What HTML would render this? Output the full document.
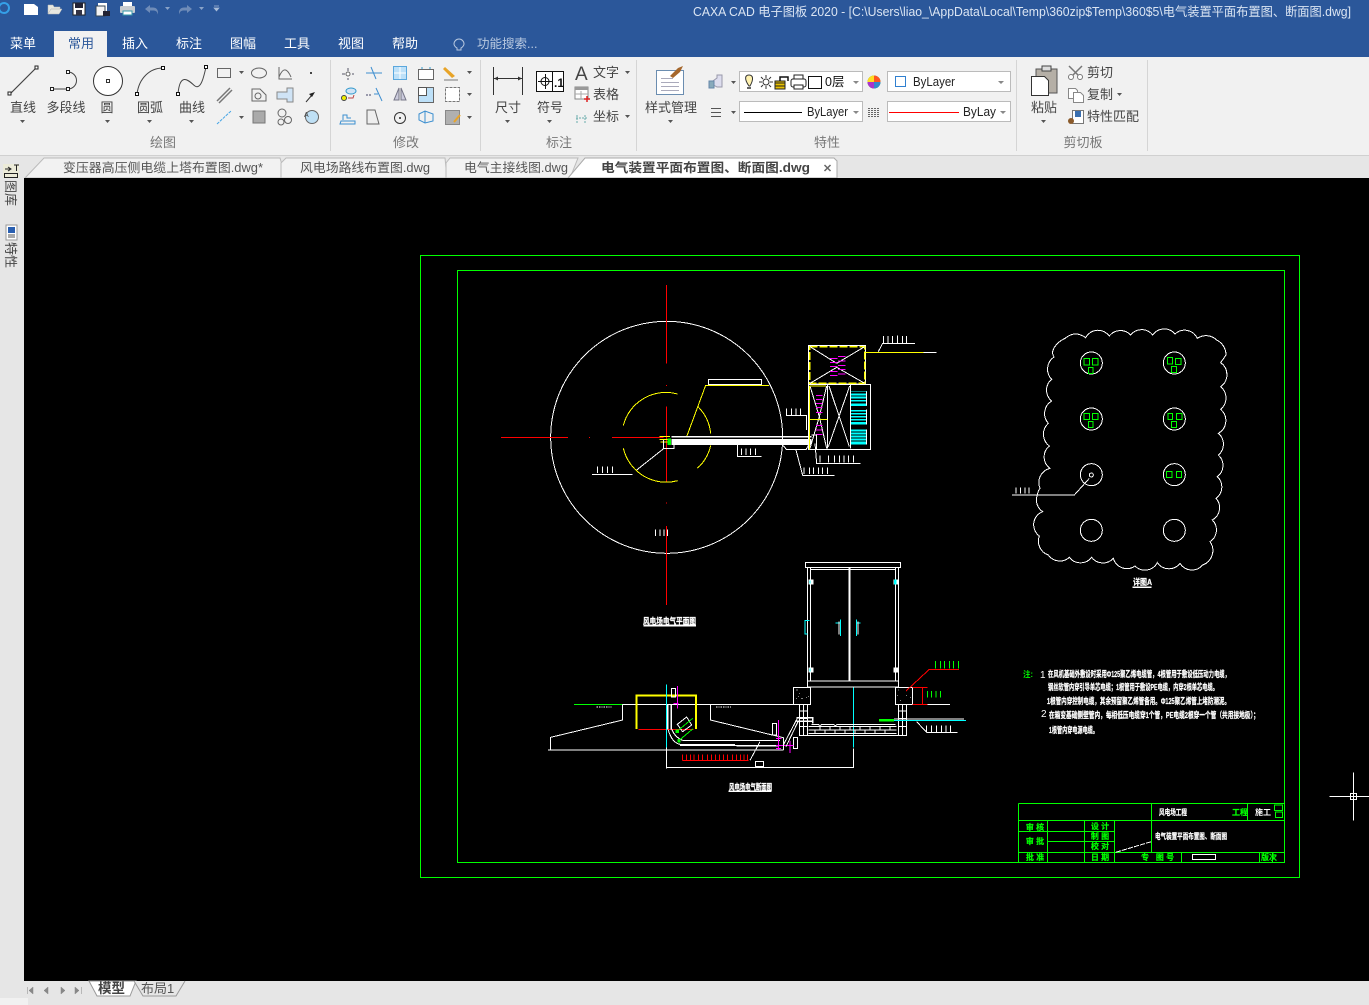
<!DOCTYPE html>
<html><head><meta charset="utf-8"><title>CAXA CAD</title>
<style>
html,body{margin:0;padding:0;background:#000;width:1369px;height:1005px;overflow:hidden}
svg{display:block}
text{font-family:"Liberation Sans","Noto Sans CJK SC",sans-serif}
.r{font-size:13px;fill:#444;text-anchor:middle}
.m{font-size:13px;fill:#fff;text-anchor:middle}
.g{font-size:13px;fill:#777;text-anchor:middle}
.l{font-size:13px;fill:#444}
.t{font-size:12.5px;fill:#555}
.c{font-size:8.5px;fill:#fff;font-weight:700;stroke:#fff;stroke-width:.25}
.b{font-size:8px;fill:#0f0;font-weight:700;text-anchor:middle;stroke:#0f0;stroke-width:.2}
.w{fill:none;stroke:#fff;stroke-width:3}
.y{fill:none;stroke:#ff0;stroke-width:3}
.rd{fill:none;stroke:#f00;stroke-width:3}
.gn{fill:none;stroke:#0f0;stroke-width:3}
.cy{fill:none;stroke:#0ff;stroke-width:3}
.mg{fill:none;stroke:#f0f;stroke-width:3}
.i{fill:none;stroke:#666;stroke-width:1}
.bl{fill:none;stroke:#3c8fd0;stroke-width:1}
.cr{fill:#555}
</style></head><body>
<svg xmlns="http://www.w3.org/2000/svg" width="1369" height="1005" viewBox="0 0 1369 1005">
<!-- base -->
<rect width="1369" height="1005" fill="#e6e6e6"/>
<rect x="0" y="0" width="1369" height="57" fill="#2b579a"/>
<rect x="0" y="57" width="1369" height="98" fill="#f1f1f1"/>
<rect x="0" y="155" width="1369" height="1" fill="#d0d0d0"/>
<rect x="54" y="31" width="53" height="27" fill="#f1f1f1"/>
<!-- title bar icons -->
<g>
<circle cx="4" cy="8" r="5" fill="none" stroke="#35a0e8" stroke-width="2"/>
<path d="M24 4h10l4 3v8H24z" fill="#fff"/>
<path d="M48 14V5h5l1 2h6v2h-9l-3 5zM48 14l3-5h11l-3 5z" fill="#e8e8e0" stroke="#bbb" stroke-width=".5"/>
<rect x="73" y="3" width="12" height="12" fill="#fff" stroke="#222"/><rect x="75" y="3" width="8" height="5" fill="#223"/><rect x="76" y="10" width="6" height="5" fill="#334"/>
<path d="M98 3h9v9H98z" fill="#fff"/><path d="M96 6h9v10h-9z" fill="#f4f4f4" stroke="#345"/><rect x="103" y="11" width="7" height="5" fill="#223"/>
<rect x="123" y="2" width="9" height="4" fill="#fff"/><rect x="120" y="6" width="15" height="7" rx="1" fill="#c8ccd0"/><rect x="123" y="11" width="9" height="4" fill="#fff" stroke="#39a"/>
<path d="M145 9l5-4v2.500h3c3 0 5 2 5 5v2c-1-3-2-4-5-4h-3V13z" fill="#6f8cb8"/>
<path d="M165 7h5l-2.500 3z" fill="#8aa3c8"/>
<path d="M192 9l-5-4v2.500h-3c-3 0-5 2-5 5v2c1-3 2-4 5-4h3V13z" fill="#6f8cb8"/>
<path d="M199 7h5l-2.500 3z" fill="#8aa3c8"/>
<path d="M214 6h5M214 8h5l-2.500 3z" stroke="#a8bcd8" fill="#a8bcd8" stroke-width=".7"/>
</g>
<text x="693" y="16" font-size="12.500" fill="#dbe5f3" textLength="658" lengthAdjust="spacingAndGlyphs">CAXA CAD 电子图板 2020 - [C:\Users\liao_\AppData\Local\Temp\360zip$Temp\360$5\电气装置平面布置图、断面图.dwg]</text>
<!-- menu -->
<g>
<text class="m" x="23" y="48">菜单</text>
<text class="m" x="81" y="48" style="fill:#2b579a">常用</text>
<text class="m" x="135" y="48">插入</text>
<text class="m" x="189" y="48">标注</text>
<text class="m" x="243" y="48">图幅</text>
<text class="m" x="297" y="48">工具</text>
<text class="m" x="351" y="48">视图</text>
<text class="m" x="405" y="48">帮助</text>
<path d="M457 48v2h4v-2c2-1 3-3 3-4a5 5 0 1 0-10 0c0 1 1 3 3 4z" fill="none" stroke="#b9c9e0"/>
<text x="477" y="48" font-size="12.500" fill="#b9c9e0">功能搜索...</text>
</g>
<!-- group seps -->
<path d="M330.500 60v91M480.500 60v91M636.500 60v91M1016.500 60v91M1147.500 60v91" stroke="#d5d5d5"/>
<!-- Draw group large -->
<g fill="none" stroke="#444">
<path d="M10 94L36 68" stroke-width="1.200"/><rect x="8" y="92" width="3" height="3" fill="#fff" stroke="#222"/><rect x="35" y="66" width="3" height="3" fill="#fff" stroke="#222"/>
<path d="M52 89h16a8.500 8.500 0 0 0 0-17" stroke-width="1"/><rect x="50.500" y="87.500" width="3" height="3" fill="#fff" stroke="#222"/><rect x="66.500" y="87.500" width="3" height="3" fill="#fff" stroke="#222"/><rect x="66.500" y="70.500" width="3" height="3" fill="#fff" stroke="#222"/>
<circle cx="108" cy="81" r="14.500" fill="#fff" stroke="#333"/><rect x="106.500" y="79.500" width="3" height="3" fill="#fff" stroke="#333"/>
<path d="M137 94C139 78 150 68 163 68" stroke-width="1"/><rect x="135.500" y="92.500" width="3" height="3" fill="#fff" stroke="#111"/><rect x="161.500" y="66.500" width="3" height="3" fill="#fff" stroke="#111"/>
<path d="M178 94C180 70 190 82 195 86C201 90 204 76 206 67" stroke-width="1"/><rect x="176.500" y="92.500" width="3" height="3" fill="#fff" stroke="#111"/><rect x="204.500" y="65.500" width="3" height="3" fill="#fff" stroke="#111"/>
</g>
<text class="r" x="23" y="112">直线</text><text class="r" x="66" y="112">多段线</text><text class="r" x="107" y="112">圆</text><text class="r" x="150" y="112">圆弧</text><text class="r" x="192" y="112">曲线</text>
<path class="cr" d="M20 120h5l-2.500 3zM105 120h5l-2.500 3zM147 120h5l-2.500 3zM189 120h5l-2.500 3zM239 71h5l-2.500 3zM239 116h5l-2.500 3zM467 71h5l-2.500 3zM467 93h5l-2.500 3zM467 116h5l-2.500 3z"/>
<!-- draw small -->
<rect x="217.500" y="68.500" width="13" height="9" class="i"/>
<ellipse cx="259" cy="73" rx="7.500" ry="5" class="i"/>
<path class="i" d="M279 67v12h13M279 77c4-10 8-9 12 0"/>
<rect x="310" y="72" width="2" height="2" fill="#444"/>
<path d="M217 101l13-13M219 103l13-13" stroke="#777" stroke-width="1.500"/>
<path d="M252 89h8l6 6v6h-14z" class="i"/><circle cx="258" cy="96" r="3" class="i"/>
<path d="M277 92h10v-4h6v14h-6v-3h-10z" fill="#cfe3f5" stroke="#888"/>
<path d="M306 102l6-7" stroke="#333"/><path d="M315 92l-6 2 3 3z" fill="#222"/>
<path d="M217 124l14-13" stroke="#45a5e6" stroke-dasharray="3 1"/>
<rect x="253" y="111" width="12" height="12" fill="#aaa" stroke="#777"/>
<circle cx="282" cy="113" r="4" class="i"/><circle cx="288" cy="120" r="3.500" class="i"/><circle cx="281" cy="122" r="3" class="i"/>
<circle cx="312" cy="117" r="6.500" fill="#bfe0f5" stroke="#666"/><text x="304" y="117" font-size="7" fill="#444">A</text>
<!-- modify small -->
<path d="M348 68v12M342 74h12" stroke="#556" stroke-dasharray="3 2"/><circle cx="348" cy="74" r="2" fill="#fff" stroke="#666"/>
<path d="M366 73h16M371 67l5 12" stroke="#3f8fd0" stroke-width="1"/>
<rect x="393.500" y="66.500" width="13" height="13" fill="#bde0f8" stroke="#5aa7dd"/><path d="M400 67v12M394 73h12" stroke="#fff"/>
<rect x="418.500" y="69.500" width="15" height="10" fill="#fff" stroke="#666"/><path d="M422 69v-2M430 69v-2" stroke="#39c"/>
<path d="M445 67l10 9-3 2-9-9z" fill="#e8a428"/><path d="M444 80h14" stroke="#777"/>
<ellipse cx="351" cy="91" rx="5" ry="3" fill="#cfe3f5" stroke="#39c"/><circle cx="344" cy="98" r="2.500" fill="#ee0" stroke="#444"/><path d="M348 98h5l1-3" stroke="#b44" fill="none"/>
<path d="M366 95h6" stroke="#446" stroke-dasharray="2 1"/><path d="M374 94h4M376 88l6 13" stroke="#3f8fd0" fill="none"/>
<path d="M399 88l-5 12h5zM401 88l5 12h-5z" fill="#ccd" stroke="#778"/>
<rect x="418.500" y="87.500" width="15" height="15" fill="#bde0f8" stroke="#666"/><rect x="418.500" y="87.500" width="8" height="8" fill="#fff" stroke="#555"/>
<rect x="445.500" y="87.500" width="14" height="14" fill="#fff" stroke="#777" stroke-dasharray="3 1"/>
<path d="M341 121h14v3h-15zM343 120v-5h4v3h4" class="bl" style="stroke:#3c8fd0"/>
<path d="M367 110h8l4 14h-12z" fill="#eee" stroke="#666"/>
<circle cx="400" cy="118" r="5.500" fill="none" stroke="#333"/><circle cx="400" cy="118" r="1" fill="#222"/>
<path d="M419 114l6-3 8 3v7l-8 2-6-3zM425 111v12" class="bl"/>
<rect x="445.500" y="110.500" width="14" height="14" fill="#b0b0b0" stroke="#888"/><path d="M454 122l6-7" stroke="#e8a428" stroke-width="2"/>
<!-- dim group -->
<path d="M493.500 67v28M522.500 67v28M494 78.500h28" stroke="#333" fill="none"/>
<path d="M494 78.500l4-2v4zM522 78.500l-4-2v4z" fill="#333"/>
<rect x="536.500" y="71.500" width="27" height="20" fill="#fff" stroke="#111"/><path d="M552.500 72v19" stroke="#111"/><circle cx="545" cy="81.500" r="4" fill="none" stroke="#111"/><path d="M545.500 74v15M538 81.500h14" stroke="#111"/>
<text x="554" y="87" font-size="12" font-weight="700" fill="#111">.1</text>
<text class="r" x="508" y="112">尺寸</text><text class="r" x="550" y="112">符号</text>
<path class="cr" d="M505 120h5l-2.500 3zM547 120h5l-2.500 3zM625 71h5l-2.500 3zM625 115h5l-2.500 3zM668 120h5l-2.500 3zM731 81h5l-2.500 3zM731 111h5l-2.500 3zM1041 120h5l-2.500 3zM1117 93h5l-2.500 3z"/>
<text x="575" y="80" font-size="19" fill="#444">A</text>
<text class="l" x="593" y="77">文字</text><text class="l" x="593" y="99">表格</text><text class="l" x="593" y="121">坐标</text>
<rect x="575" y="87" width="13" height="12" fill="#fff" stroke="#888"/><rect x="575" y="87" width="13" height="3" fill="#999"/><path d="M581 91v8M575 94h13" stroke="#aaa"/><path d="M587 96v6M584 99h6" stroke="#d22" stroke-width="1.500"/>
<path d="M577 123v-9M585 123v-9M576 118h12" stroke="#6aa" stroke-dasharray="2 1"/>
<!-- style -->
<rect x="656.500" y="70.500" width="27" height="24" fill="#fff" stroke="#6b8db0"/><path d="M661 78.500h12M661 82.500h18M661 86.500h18M661 90.500h18" stroke="#aab"/><path d="M670 76l8-8 5-2-3 6-7 6z" fill="#a5672c"/>
<text class="r" x="671" y="112">样式管理</text>
<path d="M710 83l7-5v-3h5v12h-5z" fill="#dde" stroke="#99a"/><path d="M709 81h5v7h-5z" fill="#8ab" stroke="#68a"/>
<path d="M711 108.500h10M711 112.500h10M711 116.500h10" stroke="#555"/>
<rect x="739.500" y="71.500" width="123" height="20" fill="#fff" stroke="#bbb"/>
<rect x="887.500" y="71.500" width="123" height="20" fill="#fff" stroke="#bbb"/>
<rect x="739.500" y="101.500" width="123" height="20" fill="#fff" stroke="#bbb"/>
<rect x="887.500" y="101.500" width="123" height="20" fill="#fff" stroke="#bbb"/>
<path d="M749 86c-5-7-4-11 0-11s5 4 1 11z" fill="#fff2b0" stroke="#333"/><path d="M747 87h4v2h-4z" fill="#666"/>
<circle cx="766" cy="82" r="3" fill="none" stroke="#333"/><path d="M766 75v3M766 86v3M759 82h3M770 82h3M761 77l2 2M769 85l2 2M761 87l2-2M769 79l2-2" stroke="#333"/>
<rect x="775" y="81" width="10" height="8" fill="#e8c000" stroke="#222"/><path d="M780 81v-4h8v4" fill="none" stroke="#111" stroke-width="1.500"/><path d="M775 83h10M775 86h10" stroke="#222"/>
<rect x="791" y="79" width="15" height="8" rx="2" fill="#fff" stroke="#222"/><rect x="794" y="75" width="9" height="4" fill="#fff" stroke="#222"/><rect x="794" y="85" width="9" height="4" fill="#fff" stroke="#222"/>
<rect x="808.500" y="76.500" width="13" height="12" fill="#fff" stroke="#111"/>
<text x="825" y="86" font-size="12.500" fill="#111">0层</text>
<path d="M853 81h6l-3 3zM998 81h6l-3 3zM853 111h6l-3 3zM1000 111h6l-3 3z" fill="#888"/>
<circle cx="874" cy="82" r="6.500" fill="#3a4"/><path d="M874 82V75.500a6.500 6.500 0 0 1 6.500 6.500z" fill="#f52"/><path d="M874 82h6.500a6.500 6.500 0 0 1-6.500 6.500z" fill="#38c"/><path d="M874 82v6.500a6.500 6.500 0 0 1-6.500-6.500z" fill="#a3c"/><path d="M874 82h-6.500a6.500 6.500 0 0 1 6.500-6.500z" fill="#fd2"/>
<rect x="895.500" y="76.500" width="10" height="10" fill="#fff" stroke="#3080d0"/>
<text x="913" y="86" font-size="12.500" fill="#222" textLength="42" lengthAdjust="spacingAndGlyphs">ByLayer</text>
<path d="M744 112.500h58" stroke="#000"/><text x="807" y="116" font-size="12.500" fill="#222" textLength="41" lengthAdjust="spacingAndGlyphs">ByLayer</text>
<path d="M868 108.500h12M868 110.500h12M868 112.500h12M868 114.500h12M868 116.500h12" stroke="#666" stroke-dasharray="2 1"/>
<path d="M889 112.500h70" stroke="#f00"/>
<text x="963" y="116" font-size="12.500" fill="#222" textLength="33" lengthAdjust="spacingAndGlyphs">ByLay</text>
<!-- clipboard -->
<rect x="1036" y="69" width="21" height="24" fill="#b5afa6" stroke="#555"/><rect x="1042" y="66" width="9" height="5" fill="#ddd" stroke="#444"/>
<path d="M1031.500 76.500h13l4 4v15h-17z" fill="#fff" stroke="#333"/>
<text class="r" x="1044" y="112">粘贴</text>
<path d="M1069 66l13 13M1082 66l-13 13" stroke="#777" stroke-width="1.500"/><circle cx="1071" cy="77" r="2.500" fill="#fff" stroke="#777"/><circle cx="1080" cy="77" r="2.500" fill="#fff" stroke="#777"/>
<text class="l" x="1087" y="77">剪切</text>
<path d="M1068.500 88.500h7l2 2v8h-9z" fill="#fff" stroke="#888"/><path d="M1073.500 92.500h7l3 3v7h-10z" fill="#fff" stroke="#888"/>
<text class="l" x="1087" y="99">复制</text>
<rect x="1072.500" y="110.500" width="11" height="13" fill="#fff" stroke="#777"/><rect x="1075" y="111" width="6" height="6" fill="#3a6fb0"/><circle cx="1071" cy="121" r="3" fill="#8a5a2b"/>
<text class="l" x="1087" y="121">特性匹配</text>
<!-- group labels -->
<text class="g" x="163" y="147">绘图</text><text class="g" x="406" y="147">修改</text><text class="g" x="559" y="147">标注</text><text class="g" x="827" y="147">特性</text><text class="g" x="1083" y="147">剪切板</text>
<!-- doc tabs -->
<path d="M25 178L44 158H280L286 178Z" fill="#f2f2f2" stroke="#bbb"/>
<path d="M281 178V163L286 158H445L447 178Z" fill="#f2f2f2" stroke="#bbb"/>
<path d="M446 178V163L450 158H578L570 178Z" fill="#f2f2f2" stroke="#bbb"/>
<path d="M568 178L585 158H834L837 161V178Z" fill="#fff" stroke="#aaa"/>
<text class="t" x="63" y="172" textLength="200" lengthAdjust="spacingAndGlyphs">变压器高压侧电缆上塔布置图.dwg*</text>
<text class="t" x="300" y="172" textLength="130" lengthAdjust="spacingAndGlyphs">风电场路线布置图.dwg</text>
<text class="t" x="464" y="172" textLength="104" lengthAdjust="spacingAndGlyphs">电气主接线图.dwg</text>
<text x="601" y="172" font-size="12.500" font-weight="700" fill="#444" textLength="209" lengthAdjust="spacingAndGlyphs">电气装置平面布置图、断面图.dwg</text>
<path d="M824.500 165l6 6M830.500 165l-6 6" stroke="#666" stroke-width="1.500"/>
<!-- left bar -->
<rect x="0" y="156" width="24" height="849" fill="#e6e6e6"/>
<rect x="3" y="164" width="16" height="14" fill="#ecebd8"/>
<path d="M5 169h5M8 167l3 2-3 2M14 165h5M16.500 165v6" stroke="#222" fill="none"/>
<rect x="4.500" y="173.500" width="13" height="4" fill="none" stroke="#222"/>
<text x="0" y="0" font-size="13" fill="#444" transform="translate(6 180) rotate(90)">图库</text>
<rect x="6" y="225" width="11" height="15" fill="#fff" stroke="#999"/><rect x="8" y="227" width="7" height="6" fill="#2a5fb0"/><path d="M8 235h7M8 237h7" stroke="#555"/>
<text x="0" y="0" font-size="13" fill="#444" transform="translate(6 242) rotate(90)">特性</text>
<!-- canvas -->
<rect x="24" y="178" width="1345" height="803" fill="#000"/>
<g shape-rendering="crispEdges">
<rect x="420.500" y="255.500" width="879" height="622" fill="none" stroke="#0f0"/>
<rect x="457.500" y="270.500" width="827" height="592" fill="none" stroke="#0f0"/>
<path d="M1329 796h48M1353 772v48" stroke="#fff" transform="translate(.5 .5)"/>
<rect x="1350.500" y="793.500" width="6" height="6" fill="none" stroke="#fff"/>
</g>
<!-- plan view -->
<g transform="translate(490 280) scale(.33333)" shape-rendering="crispEdges">
<circle cx="530" cy="472" r="348" class="w"/>
<path class="rd" d="M530 15V250M530 315v3M530 380V605M530 668v3M530 738V975M33 472H234M297 472h3M366 472H520"/>
<path class="y" d="M400 436A132 132 0 0 1 563 342M400 505A132 132 0 0 0 563 602M625 381A132 132 0 0 1 662 460M662 497A132 132 0 0 1 622 565"/>
<path class="y" d="M647 316H837M647 316L590 470"/>
<rect x="655" y="298" width="160" height="16" class="w"/>
<rect x="545" y="468" width="420" height="5" fill="#fff"/><rect x="545" y="477" width="420" height="18" fill="#fff"/>
<path class="y" d="M508 470h32M508 478h32M512 486h28"/>
<path d="M533 475h10v20h-10z" fill="#0f0"/>
<path d="M520 480l0 26h32V494M522 505L440 570" class="w"/>
<!-- right boxes -->
<rect x="955" y="197" width="172" height="115" class="w"/>
<rect x="959" y="200" width="165" height="110" fill="none" stroke="#ff0" stroke-width="4" stroke-dasharray="24 6"/>
<path class="w" d="M960 200L1040 250M1124 200L1040 250M960 310L1040 262M1124 310L1040 262"/>
<path class="mg" d="M1020 236h22M1044 230h22M1020 248h22M1044 243h22M1020 260h22M1044 256h22M1020 274h22M1044 269h22M1020 286h22M1044 282h22"/>
<rect x="955" y="314" width="187" height="194" class="w"/>
<path class="w" d="M1013 314V505M1081 314V505M1017 318L1078 500M1079 318L1015 500M960 318L988 410L960 505M1010 318L988 410L1010 505"/>
<path class="y" d="M958 318h50M958 318V508M958 418h54"/>
<path class="mg" d="M978 346h20M978 358h20M978 370h20M978 382h20M978 397h20M978 437h20M978 450h20M978 463h20"/>
<path d="M1083 333h48v2h-48zM1083 341h48v5h-48zM1083 350h48v5h-48zM1083 360h48v5h-48zM1083 370h48v8h-48zM1083 390h48v5h-48zM1083 399h48v5h-48zM1083 408h48v5h-48zM1083 417h48v5h-48zM1083 426h48v7h-48zM1083 449h48v5h-48zM1083 458h48v5h-48zM1083 467h48v5h-48zM1083 476h48v5h-48zM1083 485h48v9h-48z" fill="#0ff"/>
<path class="w" d="M1130 335v42M1130 388v46M1130 449v45"/>
<path class="y" d="M1125 217H1300"/><path class="w" d="M1300 217h40M1165 215L1178 190H1275M1180 168v22M1194 168v22M1208 168v22M1222 166v24M1237 168v22M1250 168v22"/>
<path class="w" d="M889 385v22H950V450M905 385v22M918 385v22M932 385v22"/>
<path class="w" d="M742 495V529H815M754 505v20M768 505v20M782 505v20M797 505v20"/>
<path class="w" d="M975 490L980 550H1112M990 527v21M1015 527v21M1033 527v21M1048 527v21M1062 527v21M1075 527v21M1090 527v21"/>
<path class="w" d="M918 510L938 586H1034M942 563v19M958 563v19M970 563v19M985 563v19M998 563v19M1013 563v19"/>
<path class="w" d="M880 497L890 509H948L955 497M965 465h15v43"/>
<path class="w" d="M306 583H428M322 560v19M338 560v19M353 560v19M368 560v19"/>
<path class="w" d="M496 748v20M510 748v20M522 748v20M533 748v20"/>
<rect x="460" y="1034" width="158" height="5" fill="#fff"/>
</g>
<text class="c" x="643" y="624" textLength="53" lengthAdjust="spacingAndGlyphs">风电场电气平面图</text>
<!-- section view -->
<g transform="translate(540 555) scale(.33333)" shape-rendering="crispEdges">
<rect x="796" y="22" width="286" height="16" class="w"/>
<path class="w" d="M802 38V396H1076V38M812 38V378M1066 38V378M812 44H1066"/><rect x="926" y="38" width="6" height="340" fill="#fff"/>
<path class="w" d="M802 378H1076"/>
<path d="M806 73h14v16h-14zM1060 73h14v16h-14zM806 337h14v16h-14zM1060 337h14v16h-14z" fill="#fff"/>
<path d="M808 76h4v10h-4zM1062 74h8v14h-8zM808 340h4v10h-4z" fill="#0ff"/>
<path class="cy" d="M808 197H795V237H803M902 193V243M949 193V243M886 204H902M949 204H962"/><path class="w" d="M897 200V238M954 200V238"/>
<rect x="760" y="397" width="52" height="51" class="w"/><rect x="1066" y="397" width="52" height="51" class="w"/>
<path d="M770 405h2M778 415h2M768 430h2M785 430h2M798 428h2M805 425h2M775 425h2M1075 405h2M1098 422h2M1110 428h2M1072 422h2M1080 436h2" stroke="#fff" stroke-width="3"/>
<path class="gn" d="M102 448H248"/><path class="w" d="M248 448H760M248 448V495L32 547V585M511 448V495L730 548"/>
<rect x="24" y="583" width="706" height="4" fill="#fff"/>
<path d="M170 456h45M528 456h45" stroke="#fff" stroke-width="3" stroke-dasharray="4 3"/>
<path d="M290 522V422H468V522" fill="none" stroke="#ff0" stroke-width="6"/><path class="rd" d="M296 523H460"/>
<path class="cy" d="M379 388V600M940 398V578"/>
<path class="w" d="M379 578V640M379 638H940V580"/>
<rect x="394" y="400" width="13" height="26" class="w"/>
<path class="mg" d="M412 393V460M400 446H416"/>
<path d="M381 448h5v75h-5zM391 448h5v75h-5z" fill="#fff"/>
<path class="w" d="M385 525C392 550 405 565 420 568H585M395 522C402 540 412 550 428 556H720M590 557h128M585 572h130M420 572H585"/><rect x="420" y="567" width="165" height="4" fill="#fff"/><rect x="590" y="570" width="125" height="4" fill="#fff"/>
<path class="w" d="M412 508L440 486L455 510L428 530Z"/>
<path class="gn" d="M410 530L458 490M415 558L458 522"/>
<rect x="407" y="524" width="10" height="10" fill="#0f0"/><rect x="412" y="552" width="10" height="10" fill="#0f0"/>
<path class="rd" d="M427 616H625M427 598v18M440 598v18M452 598v18M462 598v18M475 598v18M488 598v18M502 598v18M515 598v18M527 598v18M538 598v18M550 598v18M562 598v18M577 598v18M590 598v18M602 598v18M612 598v18M623 598v18"/>
<path class="w" d="M630 616L660 560"/><rect x="646" y="619" width="24" height="16" class="w"/>
<rect x="697" y="505" width="13" height="35" class="w"/><rect x="760" y="547" width="13" height="33" class="w"/>
<path class="mg" d="M715 495V585M708 550h16M708 572h52M750 558v36M708 580h15"/>
<path class="w" d="M730 548V585M730 570L772 490M738 575L775 498"/>
<path d="M770 486h50v5h-50zM770 496h50v5h-50zM816 486h4v20h-4z" fill="#fff"/>
<path class="w" d="M778 450V542H1100V450M802 450V540M1076 450V540M778 468h24M778 490h24M778 515h24M1076 468h24M1076 490h24M1076 515h24M790 450v90M1088 450v90M805 515H1070M805 525H1070M805 535H1070M840 515v10M870 515v10M900 515v10M930 515v10M960 515v10M990 515v10M1020 515v10M1050 515v10M825 525v10M855 525v10M885 525v10M915 525v10M945 525v10M975 525v10M1005 525v10M1035 525v10M815 508h20l5 4 5-4h35l6 4 6-4H1066"/>
<path class="rd" d="M1098 408L1168 343H1257M1118 397H1163M1147 397V448M1118 448H1163"/>
<path class="w" d="M1163 448H1230"/>
<path class="gn" d="M1187 318v22M1201 318v22M1214 318v22M1228 318v22M1241 318v22M1255 318v22M1162 408v20M1175 408v20M1188 408v20M1202 408v20"/>
<rect x="1017" y="492" width="45" height="8" fill="#0f0"/><path class="cy" d="M1062 496H1278"/><path class="w" d="M1062 492H1272M1130 500L1160 532H1253M1160 511v21M1175 511v21M1190 511v21M1204 511v21M1218 511v21M1232 511v21"/>
<rect x="565" y="706" width="130" height="5" fill="#fff"/>
</g>
<text class="c" x="729" y="790" textLength="43" lengthAdjust="spacingAndGlyphs">风电场电气断面图</text>
<!-- detail -->
<g transform="translate(1000 320) scale(.33333)" shape-rendering="crispEdges">
<path class="w" d="M162 111C150 95 165 70 195 55Q225 30 257 53A42 42 0 0 1 328 48A42 42 0 0 1 392 45A42 42 0 0 1 458 45A42 42 0 0 1 525 42A42 42 0 0 1 592 55A46 46 0 0 1 650 60A50 50 0 0 1 678 105L662 128A44 44 0 0 1 662 200A44 44 0 0 1 662 268A44 44 0 0 1 655 340A42 42 0 0 1 655 405A42 42 0 0 1 652 470A42 42 0 0 1 648 535A42 42 0 0 1 637 600A42 42 0 0 1 630 665A46 46 0 0 1 608 735A42 42 0 0 1 540 730A42 42 0 0 1 472 728A42 42 0 0 1 405 738A42 42 0 0 1 340 715A42 42 0 0 1 275 712A42 42 0 0 1 208 712A42 42 0 0 1 145 705A44 44 0 0 1 118 648A42 42 0 0 1 128 575A42 42 0 0 1 112 525A42 42 0 0 1 120 505A44 44 0 0 1 150 445A42 42 0 0 1 148 378A44 44 0 0 1 145 310A44 44 0 0 1 155 243A42 42 0 0 1 155 178A44 44 0 0 1 162 111Z"/>
<circle cx="274" cy="129" r="33" class="w"/><circle cx="523" cy="129" r="33" class="w"/><circle cx="274" cy="297" r="33" class="w"/><circle cx="523" cy="297" r="33" class="w"/><circle cx="274" cy="464" r="33" class="w"/><circle cx="523" cy="464" r="33" class="w"/><circle cx="274" cy="631" r="33" class="w"/><circle cx="523" cy="631" r="33" class="w"/>
<circle cx="274" cy="465" r="6" class="w"/>
<path class="gn" d="M252 115h16v20h-16zM278 115h16v20h-16zM265 142h14v18h-14zM502 112h15v20h-15zM527 115h16v18h-16zM514 140h15v18h-15zM252 280h16v18h-16zM278 280h16v18h-16zM265 305h14v18h-14zM504 280h14v18h-14zM530 280h16v18h-16zM515 305h14v18h-14zM500 455h16v18h-16zM530 455h15v18h-15z"/>
<path class="w" d="M36 525H223L268 475M48 502v19M62 502v19M75 502v19M87 502v19"/>
<rect x="397" y="799" width="58" height="5" fill="#fff"/>
</g>
<text class="c" x="1133" y="585" textLength="19" lengthAdjust="spacingAndGlyphs">详图A</text>
<!-- notes -->
<g>
<text x="1023" y="677" font-size="8" font-weight="700" fill="#0f0" textLength="10" lengthAdjust="spacingAndGlyphs">注:</text>
<text x="1040" y="678" font-size="10" fill="#fff">1</text>
<text class="c" x="1048" y="677" textLength="182" lengthAdjust="spacingAndGlyphs">在风机基础外敷设时采用Φ125聚乙烯电缆管，4根管用于敷设低压动力电缆，</text>
<text class="c" x="1048" y="690" textLength="170" lengthAdjust="spacingAndGlyphs">钢丝软管内穿引导单芯电缆；1根管用于敷设PE电缆，内穿2根单芯电缆。</text>
<text class="c" x="1047" y="704" textLength="183" lengthAdjust="spacingAndGlyphs">1根管内穿控制电缆，其余预留聚乙烯管备用。Φ125聚乙烯管上堵防潮泥。</text>
<text x="1041" y="717" font-size="10" fill="#fff">2</text>
<text class="c" x="1049" y="718" textLength="210" lengthAdjust="spacingAndGlyphs">在箱变基础侧壁管内，每相低压电缆穿1个管，PE电缆2根穿一个管（共用接地极）；</text>
<text class="c" x="1049" y="733" textLength="49" lengthAdjust="spacingAndGlyphs">1根管内穿电源电缆。</text>
</g>
<!-- title block -->
<g transform="translate(1010 660) scale(.33333)" shape-rendering="crispEdges">
<path class="gn" d="M25 430H823V607M25 430V607M0 607H823M424 430V577M712 430V482M25 482H823M25 515H314M113 545H314M25 577H823M113 482V607M223 482V607M314 482V607M515 577V607M748 577V607M788 577V607"/>
<rect x="793" y="435" width="25" height="17" class="gn"/><rect x="796" y="456" width="22" height="17" class="gn"/>
<rect x="547" y="583" width="70" height="15" class="w"/>
<path d="M317 577L424 545" stroke="#fff" stroke-width="3" stroke-dasharray="16 3"/>
</g>
<text x="1159" y="815" font-size="8" font-weight="700" fill="#fff" stroke="#fff" stroke-width=".2" textLength="28" lengthAdjust="spacingAndGlyphs">风电场工程</text>
<text class="b" x="1240" y="815">工程</text>
<text x="1255" y="815" font-size="8" font-weight="700" fill="#fff">施工</text>
<text x="1155" y="839" font-size="8" font-weight="700" fill="#fff" stroke="#fff" stroke-width=".2" textLength="72" lengthAdjust="spacingAndGlyphs">电气装置平面布置图、断面图</text>
<g>
<text class="b" x="1035" y="830">审 核</text><text class="b" x="1035" y="844">审 批</text><text class="b" x="1035" y="860">批 准</text>
<text class="b" x="1100" y="829">设 计</text><text class="b" x="1100" y="839">制 图</text><text class="b" x="1100" y="849">校 对</text><text class="b" x="1100" y="860">日 期</text>
<text class="b" x="1145" y="860">专</text><text class="b" x="1165" y="860">图 号</text><text class="b" x="1269" y="860">版次</text>
</g>
<!-- bottom -->
<rect x="0" y="981" width="1369" height="24" fill="#e6e6e6"/>
<rect x="0" y="998" width="28" height="7" fill="#f1f1f1"/>
<path d="M27.500 987v7M33 987l-4 3.500 4 3.500zM48 987l-4 3.500 4 3.500zM61 987l4 3.500-4 3.500zM75 987l4 3.500-4 3.500zM81.500 987v7" fill="#888" stroke="#888" stroke-width=".5"/>
<path d="M89 981L97 996H130L136 981Z" fill="#fff" stroke="#999"/>
<path d="M134 981L143 996H176L185 981" fill="#e6e6e6" stroke="#999"/>
<text x="98" y="993" font-size="13.500" font-weight="700" fill="#444">模型</text>
<text x="141" y="993" font-size="13" fill="#555">布局1</text>
</svg>
</body></html>
